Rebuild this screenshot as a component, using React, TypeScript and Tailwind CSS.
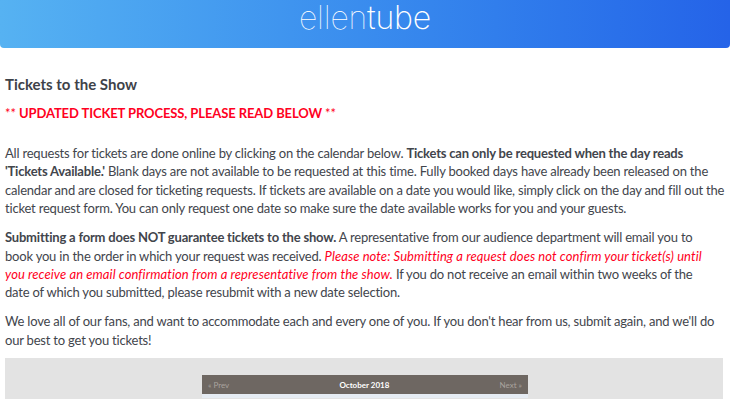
const font = "[font-family:Lato,sans-serif]";

function Header() {
  return (
    <header className="flex h-12 items-start justify-center rounded-b-sm bg-gradient-to-r from-[#56b2f2] to-[#2563e8]">
      <p className="text-[32px] leading-9 tracking-[-0.2px] text-white [font-family:Inter,sans-serif]">
        <span className="font-thin">ellen</span>
        <span className="font-extralight">tube</span>
      </p>
    </header>
  );
}

function Calendar() {
  return (
    <div className="mt-[9px] mr-[2px] h-[41px] bg-[#e3e3e3] pt-[17px]">
      <div className="mx-auto w-[326px] translate-x-[1px]">
        <div className="flex h-[19px] items-center justify-between bg-[#6e6762] px-[6px] text-[8px] text-[#a9a39e]">
          <span>« Prev</span>
          <span className="font-bold text-white">October 2018</span>
          <span>Next »</span>
        </div>
        <div className="h-1 bg-[#e6ecf3]" />
      </div>
    </div>
  );
}

export default function App() {
  return (
    <div className={`h-[400px] w-[730px] overflow-hidden bg-white text-[#42454c] ${font}`}>
      <Header />
      <main className="pt-[26px]">
        <div className="pl-[5px] pr-[5px]">
          <h1 className="text-[15px] leading-5 font-bold text-[#3e4249]">Tickets to the Show</h1>
          <p className="mt-[9px] text-[13px] leading-5 font-bold tracking-[-0.1px] text-[#ff0022]">
            <span className="font-normal">**</span> UPDATED TICKET PROCESS, PLEASE READ BELOW <span className="font-normal">**</span>
          </p>
          <p className="mt-[21px] text-[13px] leading-[18.4px] tracking-[-0.2px]">
            All requests for tickets are done online by clicking on the calendar below. <b>Tickets can only be requested when the day reads<br />'Tickets Available.'</b> Blank days are not available to be requested at this time. Fully booked days have already been released on the<br />calendar and are closed for ticketing requests. If tickets are available on a date you would like, simply click on the day and fill out the<br />ticket request form. You can only request one date so make sure the date available works for you and your guests.
          </p>
          <p className="mt-[10.5px] text-[13px] leading-[18.4px] tracking-[-0.2px]">
            <b>Submitting a form does NOT guarantee tickets to the show.</b> A representative from our audience department will email you to<br />book you in the order in which your request was received. <em className="tracking-[0.08px] text-[#ff0022]">Please note: Submitting a request does not confirm your ticket(s) until<br />you receive an email confirmation from a representative from the show.</em> If you do not receive an email within two weeks of the<br />date of which you submitted, please resubmit with a new date selection.
          </p>
          <p className="mt-[10.5px] text-[13px] leading-[18.4px] tracking-[-0.2px]">
            We love all of our fans, and want to accommodate each and every one of you. If you don't hear from us, submit again, and we'll do<br />our best to get you tickets!
          </p>
          <Calendar />
        </div>
      </main>
    </div>
  );
}
